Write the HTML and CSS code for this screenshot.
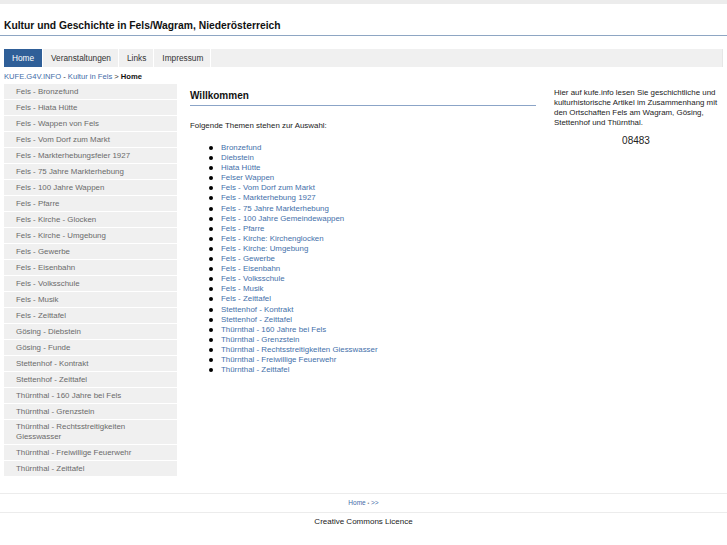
FILE: index.html
```html
<!DOCTYPE html>
<html lang="de">
<head>
<meta charset="utf-8">
<title>Kultur und Geschichte in Fels/Wagram</title>
<link rel="stylesheet" href="styles.css">
</head>
<body>
<div class="topbar"></div>
<header class="header">
  <h1 class="site-title">Kultur und Geschichte in Fels/Wagram, Niederösterreich</h1>
</header>
<nav class="tabs">
  <a class="tab active" href="#">Home</a>
  <a class="tab" href="#">Veranstaltungen</a>
  <a class="tab" href="#">Links</a>
  <a class="tab" href="#">Impressum</a>
</nav>
<div class="crumbs"><a href="#">KUFE.G4V.INFO</a> - <a href="#">Kultur in Fels</a> &gt; <b>Home</b></div>
<div class="layout">
  <ul class="sidenav">
    <li><a href="#">Fels - Bronzefund</a></li>
    <li><a href="#">Fels - Hiata Hütte</a></li>
    <li><a href="#">Fels - Wappen von Fels</a></li>
    <li><a href="#">Fels - Vom Dorf zum Markt</a></li>
    <li><a href="#">Fels - Markterhebungsfeier 1927</a></li>
    <li><a href="#">Fels - 75 Jahre Markterhebung</a></li>
    <li><a href="#">Fels - 100 Jahre Wappen</a></li>
    <li><a href="#">Fels - Pfarre</a></li>
    <li><a href="#">Fels - Kirche - Glocken</a></li>
    <li><a href="#">Fels - Kirche - Umgebung</a></li>
    <li><a href="#">Fels - Gewerbe</a></li>
    <li><a href="#">Fels - Eisenbahn</a></li>
    <li><a href="#">Fels - Volksschule</a></li>
    <li><a href="#">Fels - Musik</a></li>
    <li><a href="#">Fels - Zeittafel</a></li>
    <li><a href="#">Gösing - Diebstein</a></li>
    <li><a href="#">Gösing - Funde</a></li>
    <li><a href="#">Stettenhof - Kontrakt</a></li>
    <li><a href="#">Stettenhof - Zeittafel</a></li>
    <li><a href="#">Thürnthal - 160 Jahre bei Fels</a></li>
    <li><a href="#">Thürnthal - Grenzstein</a></li>
    <li><a href="#">Thürnthal - Rechtsstreitigkeiten Giesswasser</a></li>
    <li><a href="#">Thürnthal - Freiwillige Feuerwehr</a></li>
    <li><a href="#">Thürnthal - Zeittafel</a></li>
  </ul>
  <main class="main">
    <h2 class="main-title">Willkommen</h2>
    <p class="intro">Folgende Themen stehen zur Auswahl:</p>
    <ul class="topics">
      <li><a href="#">Bronzefund</a></li>
      <li><a href="#">Diebstein</a></li>
      <li><a href="#">Hiata Hütte</a></li>
      <li><a href="#">Felser Wappen</a></li>
      <li><a href="#">Fels - Vom Dorf zum Markt</a></li>
      <li><a href="#">Fels - Markterhebung 1927</a></li>
      <li><a href="#">Fels - 75 Jahre Markterhebung</a></li>
      <li><a href="#">Fels - 100 Jahre Gemeindewappen</a></li>
      <li><a href="#">Fels - Pfarre</a></li>
      <li><a href="#">Fels - Kirche: Kirchenglocken</a></li>
      <li><a href="#">Fels - Kirche: Umgebung</a></li>
      <li><a href="#">Fels - Gewerbe</a></li>
      <li><a href="#">Fels - Eisenbahn</a></li>
      <li><a href="#">Fels - Volksschule</a></li>
      <li><a href="#">Fels - Musik</a></li>
      <li><a href="#">Fels - Zeittafel</a></li>
      <li><a href="#">Stettenhof - Kontrakt</a></li>
      <li><a href="#">Stettenhof - Zeittafel</a></li>
      <li><a href="#">Thürnthal - 160 Jahre bei Fels</a></li>
      <li><a href="#">Thürnthal - Grenzstein</a></li>
      <li><a href="#">Thürnthal - Rechtsstreitigkeiten Giesswasser</a></li>
      <li><a href="#">Thürnthal - Freiwillige Feuerwehr</a></li>
      <li><a href="#">Thürnthal - Zeittafel</a></li>
    </ul>
  </main>
  <aside class="aside">
    <p class="aside-text">Hier auf kufe.info lesen Sie geschichtliche und kulturhistorische Artikel im Zusammenhang mit den Ortschaften Fels am Wagram, Gösing, Stettenhof und Thürnthal.</p>
    <div class="counter">08483</div>
  </aside>
</div>
<footer class="footer">
  <div class="footer-nav"><a href="#">Home</a> <span class="dot">•</span> <a href="#">&gt;&gt;</a></div>
  <div class="licence">Creative Commons Licence</div>
</footer>
</body>
</html>
```
FILE: styles.css
```css
* { box-sizing: border-box; }
html, body { margin: 0; padding: 0; background: #fff; }
body {
  font-family: "Liberation Sans", Arial, sans-serif;
  color: #222;
  width: 727px;
}
a { text-decoration: none; color: #3f6ca8; }

.topbar { height: 4px; background: #ececec; }

.header {
  padding: 16px 4px 3px 4px;
  border-bottom: 1px solid #8ea6c3;
}
.site-title {
  margin: 0;
  font-size: 10.3px;
  line-height: 12px;
  font-weight: bold;
  color: #111;
}

.tabs {
  display: flex;
  margin: 13px 4px 0 4px;
  height: 18px;
  background: #f0f0f0;
  border-right: 1px solid #e6e6e6;
}
.tab {
  display: block;
  height: 18px;
  line-height: 18px;
  font-size: 8.3px;
  color: #333;
  padding: 0 7px 0 8px;
  border-right: 1px solid #fff;
}
.tab.active { background: #2f5f98; color: #fff; width: 39px; padding: 0; text-align: center; }

.crumbs {
  margin: 0 4px;
  padding-top: 4px;
  height: 17px;
  font-size: 7.6px;
  line-height: 12px;
  color: #333;
}
.crumbs a { color: #3f6ca8; }
.crumbs b { color: #111; }

.layout { display: flex; align-items: flex-start; padding: 0 4px; }

.sidenav {
  list-style: none;
  margin: 0;
  padding: 0;
  width: 173px;
  flex: none;
}
.sidenav li {
  background: #f0f0f0;
  margin-bottom: 1px;
}
.sidenav a {
  display: block;
  padding: 3px 12px 3px 12px;
  font-size: 7.9px;
  line-height: 9px;
  color: #6a6a6a;
}
.sidenav li:nth-child(22) a { line-height: 10px; padding-top: 2px; padding-bottom: 2px; }

.main {
  width: 346px;
  flex: none;
  margin-left: 13px;
}
.main-title {
  margin: 6px 0 0 0;
  font-size: 10px;
  line-height: 12px;
  padding-bottom: 3px;
  border-bottom: 1px solid #8ba4c7;
  color: #111;
}
.intro {
  margin: 15px 0 0 0;
  font-size: 7.9px;
  line-height: 10px;
  color: #222;
}
.topics {
  margin: 12px 0 0 0;
  padding-left: 31px;
  font-size: 7.9px;
  line-height: 10.1px;
  list-style: none;
}
.topics li { position: relative; }
.topics li::before {
  content: "";
  position: absolute;
  left: -12px;
  top: 3px;
  width: 4px;
  height: 4px;
  border-radius: 50%;
  background: #000;
}
.topics a { color: #4470aa; }

.aside {
  margin-left: 18px;
  width: 170px;
  flex: none;
  padding-top: 4px;
}
.aside-text {
  margin: 0;
  font-size: 7.9px;
  line-height: 10px;
  color: #222;
}
.counter {
  text-align: center;
  font-size: 10px;
  line-height: 12px;
  margin-top: 7px;
  padding-right: 6px;
  color: #222;
}

.footer { margin-top: 16px; }
.footer-nav {
  border-top: 1px solid #ececec;
  border-bottom: 1px solid #ececec;
  text-align: center;
  font-size: 6.5px;
  line-height: 18px;
  color: #888;
}
.footer-nav a { color: #3f6ca8; }
.dot { font-size: 5px; color: #888; }
.licence {
  text-align: center;
  font-size: 8px;
  line-height: 18px;
  color: #222;
}
```
